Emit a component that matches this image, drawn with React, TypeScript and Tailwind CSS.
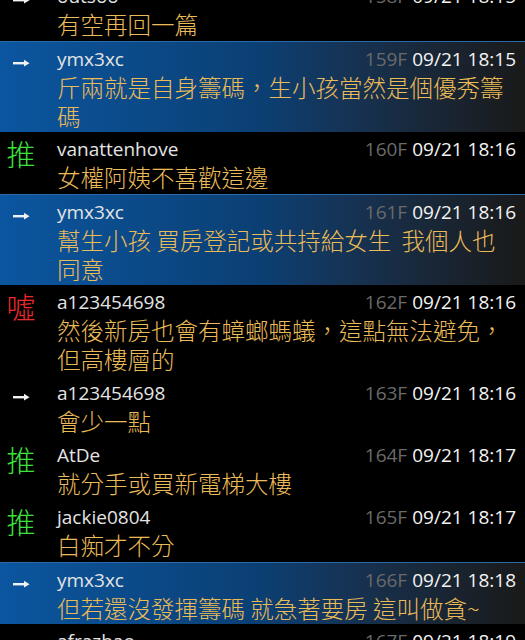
import React from "react";

type Kind = "arrow" | "push" | "boo";
type Row = { kind: Kind; user: string; floor: string; time: string; text: string; lines: 1 | 2; hl?: boolean };

const rows: Row[] = [
  { kind: "arrow", user: "outsoo", floor: "158F", time: "09/21 18:15", text: "有空再回一篇", lines: 1 },
  { kind: "arrow", user: "ymx3xc", floor: "159F", time: "09/21 18:15", text: "斤兩就是自身籌碼，生小孩當然是個優秀籌碼", lines: 2, hl: true },
  { kind: "push", user: "vanattenhove", floor: "160F", time: "09/21 18:16", text: "女權阿姨不喜歡這邊", lines: 1 },
  { kind: "arrow", user: "ymx3xc", floor: "161F", time: "09/21 18:16", text: "幫生小孩 買房登記或共持給女生  我個人也同意", lines: 2, hl: true },
  { kind: "boo", user: "a123454698", floor: "162F", time: "09/21 18:16", text: "然後新房也會有蟑螂螞蟻，這點無法避免，但高樓層的", lines: 2 },
  { kind: "arrow", user: "a123454698", floor: "163F", time: "09/21 18:16", text: "會少一點", lines: 1 },
  { kind: "push", user: "AtDe", floor: "164F", time: "09/21 18:17", text: "就分手或買新電梯大樓", lines: 1 },
  { kind: "push", user: "jackie0804", floor: "165F", time: "09/21 18:17", text: "白痴才不分", lines: 1 },
  { kind: "arrow", user: "ymx3xc", floor: "166F", time: "09/21 18:18", text: "但若還沒發揮籌碼 就急著要房 這叫做貪~", lines: 1, hl: true },
  { kind: "arrow", user: "afrazhao", floor: "167F", time: "09/21 18:19", text: "嗯", lines: 1 },
];

const latin = { fontFamily: '"Open Sans", "Noto Sans", sans-serif' };
const cjk = { fontFamily: '"Noto Sans CJK TC", "Noto Sans", sans-serif' };

function Icon({ kind }: { kind: Kind }) {
  if (kind === "arrow") {
    return (
      <div className="w-[42px] h-[42px] flex items-center justify-center">
        <svg width="17" height="8" viewBox="0 0 17 8">
          <rect x="0" y="3" width="13" height="2.4" fill="#f2f2f2" />
          <path d="M11 0.8 L16.5 4.2 L11 7.4 Z" fill="#f2f2f2" />
        </svg>
      </div>
    );
  }
  return (
    <div
      className={`w-[42px] h-[42px] flex items-center justify-center text-[29px] leading-none font-light ${
        kind === "push" ? "text-[#3ee23e]" : "text-[#ee2a2a]"
      }`}
      style={cjk}
    >
      {kind === "push" ? "推" : "噓"}
    </div>
  );
}

function Item({ r }: { r: Row }) {
  return (
    <div
      className={`flex shrink-0 ${r.lines === 2 ? "h-[91px]" : "h-[62px]"} ${
        r.hl
          ? "bg-gradient-to-r from-[#0b56a0] via-[#0b3f73] to-[#191919] border-t border-[#2b6aa8]"
          : "bg-black"
      }`}
    >
      <div className="w-[57px] shrink-0">
        <Icon kind={r.kind} />
      </div>
      <div className="flex-1 min-w-0 pt-[3px] pr-[9px]">
        <div className="flex items-center h-[28px] text-[19px] leading-[28px]" style={latin}>
          <span className="text-[#e4e4e4] flex-1">{r.user}</span>
          <span className="text-[#6a6a6a]">{r.floor}</span>
          <span className="text-[#f4f4f4] ml-[5px]">{r.time}</span>
        </div>
        <div
          className="text-[23.5px] leading-[29px] text-[#ebbb58] font-light pr-[2px] whitespace-pre-wrap"
          style={cjk}
        >
          {r.text}
        </div>
      </div>
    </div>
  );
}

export default function App() {
  return (
    <div className="w-[525px] h-[640px] overflow-hidden bg-black">
      <div className="flex flex-col mt-[-21px]">
        {rows.map((r, i) => (
          <Item key={i} r={r} />
        ))}
      </div>
    </div>
  );
}
